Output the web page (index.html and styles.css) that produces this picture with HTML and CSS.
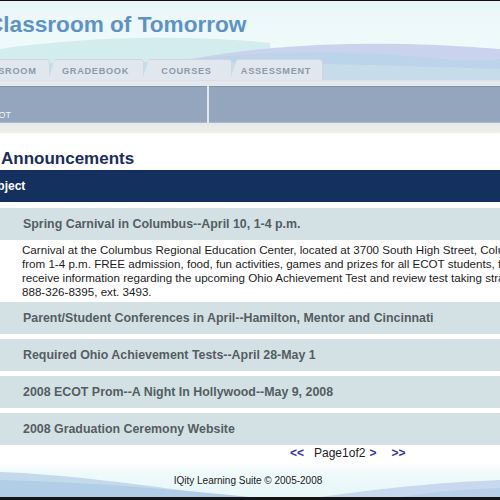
FILE: index.html
```html
<!DOCTYPE html>
<html>
<head>
<meta charset="utf-8">
<link rel="stylesheet" href="styles.css">
</head>
<body>
<div class="page">
  <header class="header">
    <svg class="hills" width="500" height="85" viewBox="0 0 500 85" preserveAspectRatio="none">
      <path d="M0,48 C70,38 170,32 270,42 L270,85 L0,85 Z" fill="#d3ecee"/>
      <path d="M180,60 C270,42 380,38 500,48 L500,85 L180,85 Z" fill="#c9d3ee"/>
      <path d="M120,68 C220,50 330,48 420,56 C460,60 485,60 500,58 L500,85 L120,85 Z" fill="#bcd4ea"/>
      <path d="M0,64 C150,58 320,62 500,68 L500,85 L0,85 Z" fill="#c6dcea"/>
    </svg>
    <h1 class="title">Classroom of Tomorrow</h1>
    <nav class="tabs">
      <div class="tab tab-first">Classroom</div>
      <div class="tab tab-grade">Gradebook</div>
      <div class="tab tab-courses">Courses</div>
      <div class="tab tab-assess">Assessment</div>
    </nav>
    <div class="tab-strip"></div>
  </header>
  <div class="subbar">
    <div class="subbar-left"><span class="subbar-text">ECOT</span></div>
    <div class="subbar-right"></div>
  </div>
  <div class="band"></div>

  <main class="main">
    <h2 class="heading">Announcements</h2>
    <div class="table-head"><span class="th-text">Subject</span></div>

    <div class="row">Spring Carnival in Columbus--April 10, 1-4 p.m.</div>
    <div class="body-text">Carnival at the Columbus Regional Education Center, located at 3700 South High Street, Columbus,<br>from 1-4 p.m. FREE admission, food, fun activities, games and prizes for all ECOT students, families<br>receive information regarding the upcoming Ohio Achievement Test and review test taking strategies<br>888-326-8395, ext. 3493.</div>
    <div class="row">Parent/Student Conferences in April--Hamilton, Mentor and Cincinnati</div>
    <div class="row">Required Ohio Achievement Tests--April 28-May 1</div>
    <div class="row">2008 ECOT Prom--A Night In Hollywood--May 9, 2008</div>
    <div class="row">2008 Graduation Ceremony Website</div>

    <div class="pager">
      <span class="pg-link">&lt;&lt;</span>
      <span class="pg-label">Page1of2</span>
      <span class="pg-link pg-next">&gt;</span>
      <span class="pg-link pg-last">&gt;&gt;</span>
    </div>
  </main>

  <footer class="footer">
    <svg class="foot-hills" width="500" height="37" viewBox="0 0 500 37" preserveAspectRatio="none">
      <path d="M0,12 C60,14 140,24 230,37 L0,37 Z" fill="#c3daec"/>
      <path d="M0,20 C90,22 170,29 250,37 L0,37 Z" fill="#b2cee7"/>
      <path d="M320,37 C390,27 450,22 500,20 L500,37 Z" fill="#c8d8ee"/>
      <path d="M400,37 C440,31 470,29 500,28 L500,37 Z" fill="#b8d0ea"/>
    </svg>
    <span class="foot-text">IQity Learning Suite © 2005-2008</span>
  </footer>
  <div class="bottom-edge"></div>
</div>
</body>
</html>
```

FILE: styles.css
```css
html, body {
  margin: 0;
  padding: 0;
  background: #ffffff;
}
body {
  font-family: "Liberation Sans", Arial, sans-serif;
  overflow: hidden;
  width: 500px;
  height: 500px;
}
.page {
  width: 500px;
  height: 500px;
  overflow: hidden;
  border-top: 1px solid #111;
  box-sizing: border-box;
  display: flex;
  flex-direction: column;
}
.header {
  position: relative;
  height: 85px;
  background: linear-gradient(#eaf7f9, #eef9fa 40px);
  overflow: hidden;
  display: flex;
  flex-direction: column;
  flex: none;
}
.hills {
  position: absolute;
  left: 0;
  top: 0;
}
.title {
  position: relative;
  margin: 12px 0 0 -13px;
  font-size: 22.6px;
  line-height: 24px;
  font-weight: bold;
  color: #5e92c5;
  white-space: nowrap;
  height: 46px;
}
.tabs {
  position: relative;
  display: flex;
  height: 21px;
  margin-left: -42px;
}
.tab {
  height: 21px;
  box-sizing: border-box;
  background: #e1e7ee;
  border-top: 1px solid #cdd6de;
  border-right: 1px solid #cfd7df;
  border-radius: 9px 4px 0 0;
  clip-path: polygon(0 100%, 7px 0, 100% 0, 100% 100%);
  font-size: 9.2px;
  font-weight: bold;
  text-transform: uppercase;
  letter-spacing: 0.7px;
  color: #8b9aaa;
  display: flex;
  align-items: center;
  justify-content: center;
  padding-top: 1px;
  margin-right: -2px;
}
.tab-first { width: 92px; }
.tab-grade { width: 96px; }
.tab-courses { width: 90px; }
.tab-assess { width: 93px; }
.tab-strip {
  position: relative;
  height: 5px;
  background: #e4e9ed;
  border-top: 1px solid #d9e0e5;
}

.subbar {
  flex: none;
  height: 37px;
  display: flex;
  background: #94a6bd;
  box-shadow: inset 0 1px 0 #8294aa, inset 0 -1px 0 #a9b9cb;
}
.subbar-left {
  width: 209px;
  border-right: 2px solid #dfe6ec;
  display: flex;
  align-items: flex-end;
  padding-bottom: 3px;
  box-sizing: border-box;
}
.subbar-text {
  margin-left: -14px;
  font-size: 9px;
  color: #f1f4f8;
}
.subbar-right {
  flex: 1;
}
.band {
  flex: none;
  height: 10px;
  background: linear-gradient(#e6e9e9, #eef0e8);
}
.main {
  flex: none;
  display: flex;
  flex-direction: column;
}
.heading {
  margin: 16px 0 0 1px;
  font-size: 17px;
  line-height: 20px;
  font-weight: bold;
  color: #1a2d5c;
}
.table-head {
  margin-top: 1px;
  height: 32px;
  background: #13305f;
  display: flex;
  align-items: center;
}
.th-text {
  margin-left: -18px;
  color: #ffffff;
  font-weight: bold;
  font-size: 12px;
}
.row {
  margin-top: 6px;
  height: 32px;
  background: #d3e1e5;
  display: flex;
  align-items: center;
  padding-left: 23px;
  font-size: 12.4px;
  font-weight: bold;
  color: #555d62;
  white-space: nowrap;
}
.row + .row {
  margin-top: 5px;
}
.body-text {
  padding: 3px 0 3px 22px;
  font-size: 11.6px;
  line-height: 14px;
  color: #1c1c1c;
  white-space: nowrap;
}
.body-text + .row {
  margin-top: 0;
}
.pager {
  margin-top: 1px;
  height: 14px;
  display: flex;
  align-items: center;
  padding-left: 290px;
  font-size: 12px;
  line-height: 14px;
}
.pg-link {
  color: #3232b0;
  font-weight: bold;
}
.pg-label {
  margin-left: 10px;
  color: #222;
}
.pg-next {
  margin-left: 4px;
}
.pg-last {
  margin-left: 15px;
}
.footer {
  position: relative;
  flex: 1;
  margin-top: 2px;
  background: linear-gradient(#ffffff, #eef9fa 12px, #e8f6f8);
  display: flex;
  align-items: center;
  justify-content: center;
}
.foot-hills {
  position: absolute;
  left: 0;
  bottom: 0;
}
.foot-text {
  position: relative;
  font-size: 10px;
  color: #222;
  margin-top: 2px;
  margin-left: -4px;
}
.bottom-edge {
  flex: none;
  height: 3px;
  background: #151515;
}
```
